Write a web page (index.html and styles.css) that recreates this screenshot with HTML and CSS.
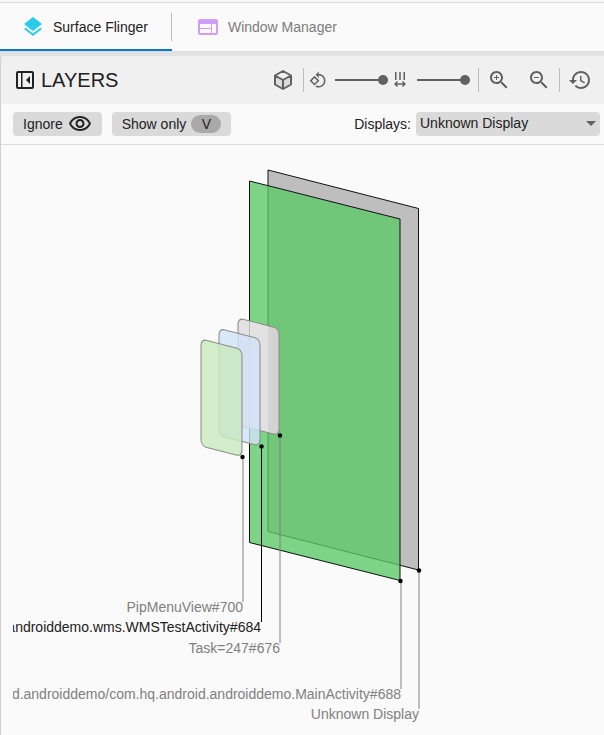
FILE: index.html
```html
<!DOCTYPE html>
<html lang="en">
<head>
<meta charset="utf-8">
<meta name="viewport" content="width=device-width, initial-scale=1">
<title>Surface Flinger</title>
<link rel="stylesheet" href="styles.css">
</head>
<body>
<nav class="tabs" aria-label="Traces">
  <a class="tab tab-active" href="#surface-flinger" aria-current="page">
    <svg class="icon icon-layers" viewBox="0 0 24 24" aria-hidden="true"><path d="M11.99 18.54l-7.37-5.73L3 14.07l9 7 9-7-1.63-1.27-7.38 5.74zM12 16l7.36-5.73L21 9l-9-7-9 7 1.63 1.27L12 16z"/></svg>
    Surface Flinger
  </a>
  <a class="tab" href="#window-manager">
    <svg class="icon icon-web" viewBox="0 0 24 24" aria-hidden="true"><path d="M20 4H4c-1.1 0-1.99.9-1.99 2L2 18c0 1.1.9 2 2 2h16c1.1 0 2-.9 2-2V6c0-1.1-.9-2-2-2zm-5 14H4v-4h11v4zm0-5H4V9h11v4zm5 5h-4V9h4v9z"/></svg>
    Window Manager
  </a>
</nav>

<main class="panel">
  <header class="panel-header">
    <div class="heading">
      <button class="icon-button" type="button" aria-label="Collapse layers">
        <svg class="icon icon-dark" viewBox="0 0 24 24" aria-hidden="true"><path fill-rule="evenodd" d="M5 3h14a2 2 0 0 1 2 2v14a2 2 0 0 1-2 2H5a2 2 0 0 1-2-2V5a2 2 0 0 1 2-2zM5 5v14h3V5zM9.500 5v14H19V5zM17 8v8l-4-4z"/></svg>
      </button>
      <h1 class="title">LAYERS</h1>
    </div>
    <div class="tools">
      <button class="icon-button" type="button" aria-label="Shading mode">
        <svg class="icon" viewBox="0 0 24 24" aria-hidden="true"><path class="cube-face" d="M4.500 8.500L12 12.500V21L4.500 16.500zM12 12.500L19.500 8.500V16.500L12 21z"/><path class="cube-edge" d="M12 3l8 4.500v9L12 21l-8-4.500v-9zM4 7.500l8 4.500 8-4.500M12 12v9"/></svg>
      </button>
      <div class="group sliders">
        <label class="slider-row">
          <svg class="icon icon-small" viewBox="0 0 24 24" role="img" aria-label="Rotation"><path d="M7.340 6.410L.86 12.900l6.490 6.480 6.490-6.480-6.500-6.490zM3.690 12.900l3.660-3.660L11 12.900l-3.660 3.660-3.650-3.660zm15.670-6.260C17.610 4.880 15.300 4 13 4V.76L8.760 5 13 9.240V6c1.790 0 3.580.68 4.950 2.050 2.730 2.730 2.730 7.170 0 9.900C16.580 19.320 14.790 20 13 20c-.97 0-1.940-.21-2.840-.61l-1.490 1.490C10.020 21.620 11.510 22 13 22c2.300 0 4.610-.88 6.360-2.640 3.520-3.510 3.520-9.210 0-12.720z"/></svg>
          <input class="slider" type="range" min="0" max="100" value="100">
        </label>
        <label class="slider-row">
          <svg class="icon icon-small" viewBox="0 0 18 18" role="img" aria-label="Spacing"><path d="M4 1h1.500v8H4zM8.250 1h1.500v8h-1.500zM12.500 1H14v8h-1.500zM3 13l3-3 1 1-1.200 1.250h6.400L11 11l1-1 3 3-3 3-1-1 1.200-1.250H5.800L7 15l-1 1z"/></svg>
          <input class="slider" type="range" min="0" max="100" value="100">
        </label>
      </div>
      <div class="group zooms">
        <button class="icon-button" type="button" aria-label="Zoom in">
          <svg class="icon" viewBox="0 0 24 24" aria-hidden="true"><path d="M15.500 14h-.79l-.28-.27C15.410 12.590 16 11.110 16 9.500 16 5.910 13.090 3 9.500 3S3 5.910 3 9.500 5.910 16 9.500 16c1.610 0 3.090-.59 4.230-1.570l.27.28v.79l5 4.990L20.490 19l-4.990-5zm-6 0C7.010 14 5 11.990 5 9.500S7.010 5 9.500 5 14 7.010 14 9.500 11.990 14 9.500 14zM10 7H9v2H7v1h2v2h1v-2h2V9h-2z"/></svg>
        </button>
        <button class="icon-button" type="button" aria-label="Zoom out">
          <svg class="icon" viewBox="0 0 24 24" aria-hidden="true"><path d="M15.500 14h-.79l-.28-.27C15.410 12.590 16 11.110 16 9.500 16 5.910 13.090 3 9.500 3S3 5.910 3 9.500 5.910 16 9.500 16c1.610 0 3.090-.59 4.230-1.570l.27.28v.79l5 4.990L20.490 19l-4.990-5zm-6 0C7.010 14 5 11.990 5 9.500S7.010 5 9.500 5 14 7.010 14 9.500 11.990 14 9.500 14zM7 9h5v1H7z"/></svg>
        </button>
      </div>
      <div class="group">
        <button class="icon-button" type="button" aria-label="Restore camera">
          <svg class="icon" viewBox="0 0 24 24" aria-hidden="true"><path d="M13 3c-4.970 0-9 4.030-9 9H1l3.890 3.890.07.14L9 12H6c0-3.870 3.130-7 7-7s7 3.130 7 7-3.130 7-7 7c-1.930 0-3.680-.79-4.940-2.060l-1.420 1.420C8.270 19.990 10.510 21 13 21c4.970 0 9-4.030 9-9s-4.030-9-9-9zm-1 5v5l4.280 2.540.72-1.210-3.500-2.080V8H12z"/></svg>
        </button>
      </div>
    </div>
  </header>

  <section class="filters" aria-label="Filters">
    <button class="chip" type="button">Ignore
      <svg class="icon icon-dark" viewBox="0 0 24 24" aria-hidden="true"><path d="M12 6c3.790 0 7.170 2.130 8.820 5.500C19.170 14.870 15.790 17 12 17s-7.170-2.130-8.820-5.500C4.830 8.130 8.210 6 12 6m0-2C7 4 2.730 7.110 1 11.500 2.730 15.890 7 19 12 19s9.270-3.110 11-7.500C21.270 7.110 17 4 12 4zm0 5c1.380 0 2.500 1.120 2.500 2.500S13.380 14 12 14s-2.500-1.120-2.500-2.500S10.620 9 12 9m0-2c-2.480 0-4.500 2.020-4.500 4.500S9.520 16 12 16s4.500-2.020 4.500-4.500S14.480 7 12 7z"/></svg>
    </button>
    <button class="chip" type="button">Show only <span class="pill">V</span></button>
    <div class="displays">
      <label for="display">Displays:</label>
      <div class="select-box">
        <select id="display" class="select"><option>Unknown Display</option></select>
      </div>
    </div>
  </section>

  <section class="scene" aria-label="3D view of layers">
    <svg class="canvas" viewBox="13 145 591 590">
      <defs>
        <linearGradient id="task-fill">
          <stop offset="0" stop-color="#e3e2e2"/>
          <stop offset=".73" stop-color="#e1e1e1"/>
          <stop offset=".73" stop-color="#d5d4d4"/>
          <stop offset="1" stop-color="#d3d2d2"/>
        </linearGradient>
      </defs>
      <path class="display-rect" d="M268 170L418.500 208.500V570L268 531.500z"/>
      <path class="visible-rect" d="M249.500 181L400 219V580.500L249.500 542.500z"/>
      <rect class="layer layer-task" width="41" height="107" rx="5" ry="6" transform="matrix(1 .255 0 1 238 318)"/>
      <path class="seam" d="M249.500 321V428"/>
      <rect class="layer layer-activity" width="41" height="107" rx="5" ry="6" transform="matrix(1 .255 0 1 219 328.500)"/>
      <rect class="layer layer-pip" width="41" height="107" rx="5" ry="6" transform="matrix(1 .255 0 1 201 339)"/>
      <path class="lead" d="M243 457V602M280 436V643M401 581V689M419 570.500V709"/>
      <path class="lead-selected" d="M261.500 446V622"/>
      <g class="dots">
        <circle cx="242.500" cy="457" r="2.200"/>
        <circle cx="261.500" cy="446.500" r="2.200"/>
        <circle cx="280" cy="435.500" r="2.200"/>
        <circle cx="400.500" cy="581" r="2.200"/>
        <circle cx="419" cy="570.500" r="2.200"/>
      </g>
      <g class="labels">
        <text x="243" y="612">PipMenuView#700</text>
        <text class="label-selected" x="261" y="632">androiddemo.wms.WMSTestActivity#684</text>
        <text x="280" y="653">Task=247#676</text>
        <text x="401" y="699">d.androiddemo/com.hq.android.androiddemo.MainActivity#688</text>
        <text x="419" y="719">Unknown Display</text>
      </g>
    </svg>
  </section>
</main>
</body>
</html>
```
FILE: styles.css
```css
* {
  box-sizing: border-box;
}

body {
  margin: 0;
  min-height: 100vh;
  display: flex;
  flex-direction: column;
  background: #e2e2e2;
  color: #212121;
  font: 14px/20px "Liberation Sans", Arial, sans-serif;
}

button,
select {
  font: inherit;
  color: inherit;
  border: 0;
}

.icon {
  display: block;
  flex: none;
  width: 24px;
  height: 24px;
  fill: #616161;
}

.icon-small {
  width: 18px;
  height: 18px;
}

.icon-dark { fill: #212121; }
.icon-layers { fill: #27cde8; }
.icon-web { fill: #cf9ff7; }

.cube-face { fill: #dcdcdc; }

.cube-edge {
  fill: none;
  stroke: #616161;
  stroke-width: 2;
  stroke-linejoin: round;
}

.tabs {
  display: flex;
  height: 52px;
  border-top: 2px solid #f7f7f7;
  border-bottom: 1px solid #dcdcdc;
  background: #fafafa;
  box-shadow: 0 1px 0 #dcdcdc inset;
}

.tab {
  display: flex;
  align-items: center;
  gap: 8px;
  height: 49px;
  padding: 1px 24px 0;
  color: #7c7c7c;
  text-decoration: none;
}

.tab-active {
  position: relative;
  padding-left: 21px;
  color: #212121;
  box-shadow: 0 -2px 0 #0b78d0 inset;
}

.tab-active::after {
  content: "";
  position: absolute;
  right: 0;
  top: 11px;
  width: 1px;
  height: 28px;
  background: #bdbdbd;
}

.panel {
  flex: 1;
  margin-top: 4px;
  border-left: 1px solid #d0d0d0;
  border-radius: 4px 0 0 0;
  background: #fafafa;
  overflow: hidden;
}

.panel-header {
  display: flex;
  align-items: center;
  justify-content: space-between;
  height: 48px;
  padding: 0 12px;
  background: #f0f0f0;
}

.heading,
.tools,
.group,
.slider-row {
  display: flex;
  align-items: center;
}

.heading { gap: 4px; }

.title {
  margin: 0;
  font-size: 20px;
  font-weight: 400;
}

.icon-button {
  padding: 0;
  background: none;
}

.tools { gap: 8px; }

.group {
  height: 24px;
  border-left: 1px solid #bdbdbd;
  padding-left: 8px;
}

.sliders {
  gap: 3px;
  padding-left: 5px;
}

.slider-row { gap: 8px; }

.zooms { gap: 16px; }

.slider {
  appearance: none;
  width: 53px;
  height: 16px;
  margin: 0;
  background: linear-gradient(#616161, #616161) center / 100% 2px no-repeat;
}

.slider::-webkit-slider-thumb {
  appearance: none;
  width: 10px;
  height: 10px;
  border-radius: 50%;
  background: #616161;
}

.filters {
  display: flex;
  align-items: center;
  gap: 10px;
  height: 41px;
  padding: 0 4px 0 12px;
  border-bottom: 1px solid #dcdcdc;
}

.chip {
  display: flex;
  align-items: center;
  gap: 5px;
  height: 24px;
  padding: 0 10px;
  border-radius: 4px;
  background: #dadada;
}

.pill {
  width: 30px;
  height: 18px;
  border-radius: 9px;
  background: #a9a9a9;
  line-height: 18px;
  text-align: center;
}

.displays {
  display: flex;
  align-items: center;
  gap: 5px;
  margin-left: auto;
}

.select-box {
  position: relative;
  width: 184px;
}

.select-box::after {
  content: "";
  position: absolute;
  right: 4px;
  top: 9px;
  border: 5px solid transparent;
  border-top-color: #616161;
  border-bottom: 0;
  pointer-events: none;
}

.select {
  display: block;
  appearance: none;
  width: 100%;
  height: 24px;
  padding: 0 4px 2px;
  border-radius: 4px;
  background: #dadada;
}

.scene { padding-left: 12px; }

.canvas {
  display: block;
  width: 100%;
  overflow: hidden;
}

.display-rect {
  fill: #bebebe;
  stroke: #111;
}

.visible-rect {
  fill: #5ac967;
  fill-opacity: .78;
  stroke: #111;
}

.layer {
  stroke: #888;
  stroke-width: 1;
}

.layer-task { fill: url(#task-fill); }
.layer-activity { fill: rgba(210, 226, 249, .8); }
.layer-pip { fill: rgba(200, 233, 192, .84); }

.seam {
  stroke: #b8b8b8;
  stroke-width: 1;
}

.lead {
  fill: none;
  stroke: #808080;
  stroke-width: 1;
}

.lead-selected {
  fill: none;
  stroke: #000;
  stroke-width: 1;
}

.labels {
  fill: #808080;
  text-anchor: end;
}

.label-selected { fill: #212121; }
```
